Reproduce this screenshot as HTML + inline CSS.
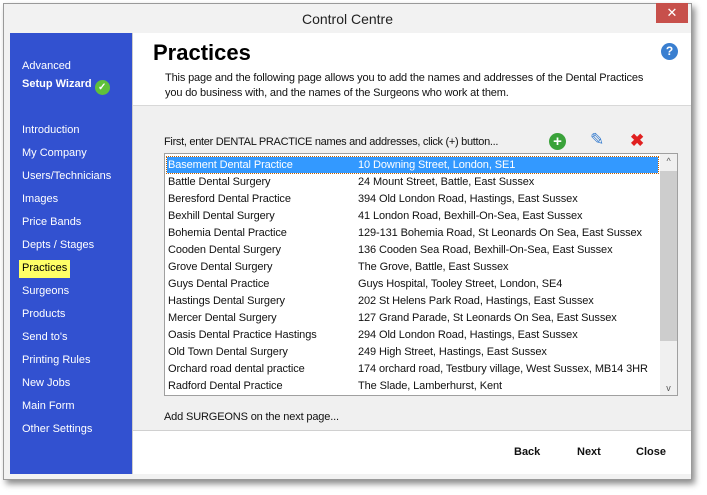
<!DOCTYPE html>
<html><head><style>
*{margin:0;padding:0;box-sizing:border-box}
body{width:707px;height:495px;background:#fff;font-family:"Liberation Sans",sans-serif;position:relative;overflow:hidden}
.win{position:absolute;left:3px;top:3px;width:689px;height:477px;background:#f2f2f2;border:1px solid #9a9a9a;box-shadow:3px 4px 6px rgba(0,0,0,.45)}
.title{position:absolute;left:0;top:0;width:100%;height:30px;text-align:center;font-size:14px;line-height:30px;color:#222}
.close{position:absolute;right:3px;top:-1px;width:32px;height:20px;background:#c7504b;color:#fff;text-align:center;font-size:13px;line-height:20px}
.side{position:absolute;left:6px;top:29px;width:122px;height:441px;background:#3251d0;color:#fff;font-size:11px}
.side div{position:absolute;left:12px}
.main{position:absolute;left:128px;top:29px;width:559px;height:441px;background:#f0f0f0;border-left:1px solid #ccc}
.hdr{position:absolute;left:0;top:0;width:100%;height:73px;background:#fff;border-bottom:1px solid #d8d8d8}
.ftr{position:absolute;left:0;top:397px;width:100%;height:44px;background:#fff;border-top:1px solid #d0d0d0}
.ftr span{position:absolute;top:15px;font-size:11px;font-weight:bold;color:#111}
.t{letter-spacing:-0.15px}
.list{position:absolute;left:31px;top:120px;width:514px;height:243px;background:#fff;border:1px solid #a0a0a0;font-size:11px;color:#111;letter-spacing:-0.1px}
.row{position:absolute;left:2px;height:16px;width:491px;line-height:16px}
.row span{position:absolute;left:191px}
.row b{font-weight:normal;position:absolute;left:1px}
.sel{background:#3399ff;color:#fff;outline:1px dotted #c06000}
.sb{position:absolute;right:0;top:0;width:17px;height:241px;background:#f0f0f0}
</style></head><body>
<div class="win">
<div class="title">Control Centre</div>
<div class="close">✕</div>
<div class="side">
<div style="top:27px">Advanced</div>
<div style="top:45px;font-weight:bold">Setup Wizard <span style="display:inline-block;width:15px;height:15px;border-radius:50%;background:#5fc13a;vertical-align:-3px;text-align:center;font-size:10px;line-height:15px">✓</span></div>
<div style="top:91px">Introduction</div>
<div style="top:114px">My Company</div>
<div style="top:137px">Users/Technicians</div>
<div style="top:160px">Images</div>
<div style="top:183px">Price Bands</div>
<div style="top:206px">Depts / Stages</div>
<div style="top:227px;left:9px;background:#ffff66;color:#000;padding:2px 3px;height:18px">Practices</div>
<div style="top:252px">Surgeons</div>
<div style="top:275px">Products</div>
<div style="top:298px">Send to's</div>
<div style="top:321px">Printing Rules</div>
<div style="top:344px">New Jobs</div>
<div style="top:367px">Main Form</div>
<div style="top:390px">Other Settings</div>
</div>
<div class="main">
<div class="hdr">
<div style="position:absolute;left:20px;top:7px;font-size:22px;font-weight:bold;color:#000">Practices</div>
<div style="position:absolute;right:13px;top:10px;width:17px;height:17px;border-radius:50%;background:#3a7fd0;color:#fff;font-size:12px;font-weight:bold;text-align:center;line-height:17px">?</div>
<div class="t" style="position:absolute;left:32px;top:38px;font-size:11px;line-height:15px;color:#111">This page and the following page allows you to add the names and addresses of the Dental Practices<br>you do business with, and the names of the Surgeons who work at them.</div>
</div>
<div class="t" style="position:absolute;left:31px;top:103px;font-size:11px;color:#111;letter-spacing:-0.3px">First, enter DENTAL PRACTICE names and addresses, click (+) button...</div>
<div style="position:absolute;left:416px;top:100px;width:17px;height:17px;border-radius:50%;background:#3aa23a;color:#fff;font-weight:bold;text-align:center;line-height:17px;font-size:15px">+</div>
<div style="position:absolute;left:457px;top:97px;color:#3a7fd0;font-size:17px">✎</div>
<div style="position:absolute;left:497px;top:98px;color:#e02020;font-size:17px;font-weight:bold">✖</div>
<div class="list">
<div class="row sel" style="top:3px"><b>Basement Dental Practice</b><span>10 Downing Street, London, SE1</span></div>
<div class="row" style="top:20px"><b>Battle Dental Surgery</b><span>24 Mount Street, Battle, East Sussex</span></div>
<div class="row" style="top:37px"><b>Beresford Dental Practice</b><span>394 Old London Road, Hastings, East Sussex</span></div>
<div class="row" style="top:54px"><b>Bexhill Dental Surgery</b><span>41 London Road, Bexhill-On-Sea, East Sussex</span></div>
<div class="row" style="top:71px"><b>Bohemia Dental Practice</b><span>129-131 Bohemia Road, St Leonards On Sea, East Sussex</span></div>
<div class="row" style="top:88px"><b>Cooden Dental Surgery</b><span>136 Cooden Sea Road, Bexhill-On-Sea, East Sussex</span></div>
<div class="row" style="top:105px"><b>Grove Dental Surgery</b><span>The Grove, Battle, East Sussex</span></div>
<div class="row" style="top:122px"><b>Guys Dental Practice</b><span>Guys Hospital, Tooley Street, London, SE4</span></div>
<div class="row" style="top:139px"><b>Hastings Dental Surgery</b><span>202 St Helens Park Road, Hastings, East Sussex</span></div>
<div class="row" style="top:156px"><b>Mercer Dental Surgery</b><span>127 Grand Parade, St Leonards On Sea, East Sussex</span></div>
<div class="row" style="top:173px"><b>Oasis Dental Practice Hastings</b><span>294 Old London Road, Hastings, East Sussex</span></div>
<div class="row" style="top:190px"><b>Old Town Dental Surgery</b><span>249 High Street, Hastings, East Sussex</span></div>
<div class="row" style="top:207px"><b>Orchard road dental practice</b><span>174 orchard road, Testbury village, West Sussex, MB14 3HR</span></div>
<div class="row" style="top:224px"><b>Radford Dental Practice</b><span>The Slade, Lamberhurst, Kent</span></div>
<div class="sb"><div style="position:absolute;left:0;top:17px;width:17px;height:170px;background:#cdcdcd"></div><div style="position:absolute;top:2px;width:17px;text-align:center;font-size:9px;color:#555">^</div><div style="position:absolute;bottom:2px;width:17px;text-align:center;font-size:9px;color:#555">v</div></div>
</div>
<div class="t" style="position:absolute;left:31px;top:378px;font-size:11px;color:#111">Add SURGEONS on the next page...</div>
<div class="ftr"><span style="left:381px">Back</span><span style="left:444px">Next</span><span style="left:503px">Close</span></div>
</div>
</div>
</body></html>
